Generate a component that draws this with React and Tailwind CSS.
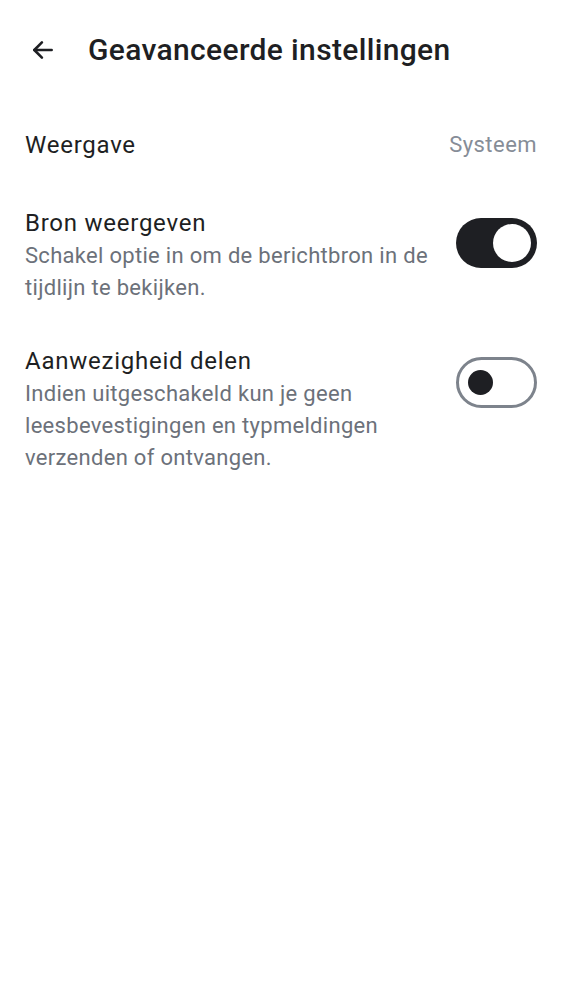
import { useState } from 'react';

function Toggle({ on, onChange }) {
  return (
    <button
      onClick={onChange}
      className={
        on
          ? 'flex h-[50px] w-[81px] shrink-0 items-center justify-end rounded-full bg-[#1e1f23] px-[6px]'
          : 'flex h-[51px] w-[81px] shrink-0 items-center justify-start rounded-full border-[3px] border-[#7d838c] bg-white px-[9px]'
      }
    >
      {on ? (
        <span className="block h-[38px] w-[38px] rounded-full bg-white" />
      ) : (
        <span className="block h-[25px] w-[25px] rounded-full bg-[#1e1f23]" />
      )}
    </button>
  );
}

export default function App() {
  const [source, setSource] = useState(true);
  const [presence, setPresence] = useState(false);

  return (
    <div className="min-h-screen bg-white font-['Roboto',sans-serif] text-[#1e1f23]">
      {/* kop */}
      <div className="flex h-[99px] items-center px-[30px]">
        <svg width="26" height="26" viewBox="0 0 24 24" fill="none" stroke="currentColor" strokeWidth="2.4" strokeLinecap="round" strokeLinejoin="round">
          <path d="M20 12H4" />
          <path d="M11 5l-7 7 7 7" />
        </svg>
        <h1 className="ml-[32px] text-[30px] font-medium tracking-[0.35px]">Geavanceerde instellingen</h1>
      </div>

      <div className="px-[25px]">
        <div className="flex h-[91px] items-center justify-between">
          <span className="text-[24px] tracking-[0.75px]">Weergave</span>
          <span className="text-[22px] tracking-[0.45px] text-[#868d97]">Systeem</span>
        </div>

        <div className="mt-[17px] flex items-start justify-between gap-4">
          <div className="max-w-[420px]">
            <div className="text-[24px] leading-[32px] tracking-[0.75px]">Bron weergeven</div>
            <div className="mt-[1px] text-[22px] leading-[32px] tracking-[0.3px] text-[#6c717a]">
              Schakel optie in om de berichtbron in de tijdlijn te bekijken.
            </div>
          </div>
          <div className="mt-[11px]">
            <Toggle on={source} onChange={() => setSource(!source)} />
          </div>
        </div>

        <div className="mt-[41px] flex items-start justify-between gap-4">
          <div className="max-w-[420px]">
            <div className="text-[24px] leading-[32px] tracking-[0.75px]">Aanwezigheid delen</div>
            <div className="mt-[1px] text-[22px] leading-[32px] tracking-[0.3px] text-[#6c717a]">
              Indien uitgeschakeld kun je geen leesbevestigingen en typmeldingen verzenden of ontvangen.
            </div>
          </div>
          <div className="mt-[12px]">
            <Toggle on={presence} onChange={() => setPresence(!presence)} />
          </div>
        </div>
      </div>
    </div>
  );
}
